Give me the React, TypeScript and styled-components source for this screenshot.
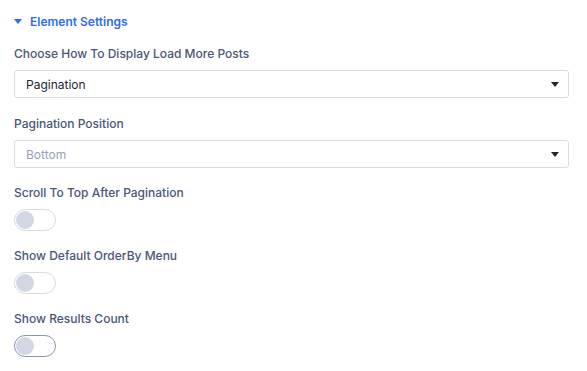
import React from 'react';
import styled, { createGlobalStyle } from 'styled-components';

const GlobalStyle = createGlobalStyle`
  body {
    margin: 0;
    background: #ffffff;
    font-family: Inter, "Liberation Sans", sans-serif;
  }
`;

const Panel = styled.div`
  width: 587px;
  box-sizing: border-box;
  padding: 13px 18px 0 14px;
`;

const Header = styled.div`
  display: flex;
  align-items: center;
  gap: 8px;
  height: 16px;
  color: #2f6bf0;
  font-size: 12px;
  font-weight: 600;
`;

const Caret = styled.span`
  width: 0;
  height: 0;
  border-left: 4px solid transparent;
  border-right: 4px solid transparent;
  border-top: 5px solid #2f6bf0;
`;

const Field = styled.div<{ $space?: number }>`
  display: flex;
  flex-direction: column;
  gap: 8px;
  margin-top: ${({ $space = 17 }) => `${$space}px`};
`;

const Label = styled.div`
  color: #4a5578;
  font-size: 12px;
  font-weight: 500;
  line-height: 16px;
`;

const Select = styled.div<{ $placeholder?: boolean }>`
  display: flex;
  align-items: center;
  justify-content: space-between;
  height: 28px;
  box-sizing: border-box;
  padding: 0 9px 0 11px;
  border: 1px solid #d7dbe6;
  border-radius: 3px;
  font-size: 12px;
  color: ${({ $placeholder }) => ($placeholder ? '#97a0bd' : '#1f2433')};
`;

const Arrow = styled.span`
  width: 0;
  height: 0;
  border-left: 4px solid transparent;
  border-right: 4px solid transparent;
  border-top: 5px solid #1f2633;
`;

const Toggle = styled.div<{ $focused?: boolean }>`
  width: 42px;
  height: 22px;
  box-sizing: border-box;
  border: 1px solid ${({ $focused }) => ($focused ? '#8a93b8' : '#d7dbe6')};
  border-radius: 11px;
  padding: 1px;
  display: flex;
  align-items: center;
`;

const Knob = styled.span`
  width: 18px;
  height: 18px;
  border-radius: 50%;
  background: #d3d7e3;
`;

type SelectFieldProps = { label: string; value: string; placeholder?: boolean; space?: number };

const SelectField = ({ label, value, placeholder, space }: SelectFieldProps) => (
  <Field $space={space}>
    <Label>{label}</Label>
    <Select $placeholder={placeholder}>
      <span>{value}</span>
      <Arrow />
    </Select>
  </Field>
);

const ToggleField = ({ label, focused }: { label: string; focused?: boolean }) => (
  <Field>
    <Label>{label}</Label>
    <Toggle $focused={focused}>
      <Knob />
    </Toggle>
  </Field>
);

const App = () => (
  <>
    <GlobalStyle />
    <Panel>
      <Header>
        <Caret />
        <span>Element Settings</span>
      </Header>
      <SelectField label="Choose How To Display Load More Posts" value="Pagination" />
      <SelectField space={18} label="Pagination Position" value="Bottom" placeholder />
      <ToggleField label="Scroll To Top After Pagination" />
      <ToggleField label="Show Default OrderBy Menu" />
      <ToggleField label="Show Results Count" focused />
    </Panel>
  </>
);

export default App;
